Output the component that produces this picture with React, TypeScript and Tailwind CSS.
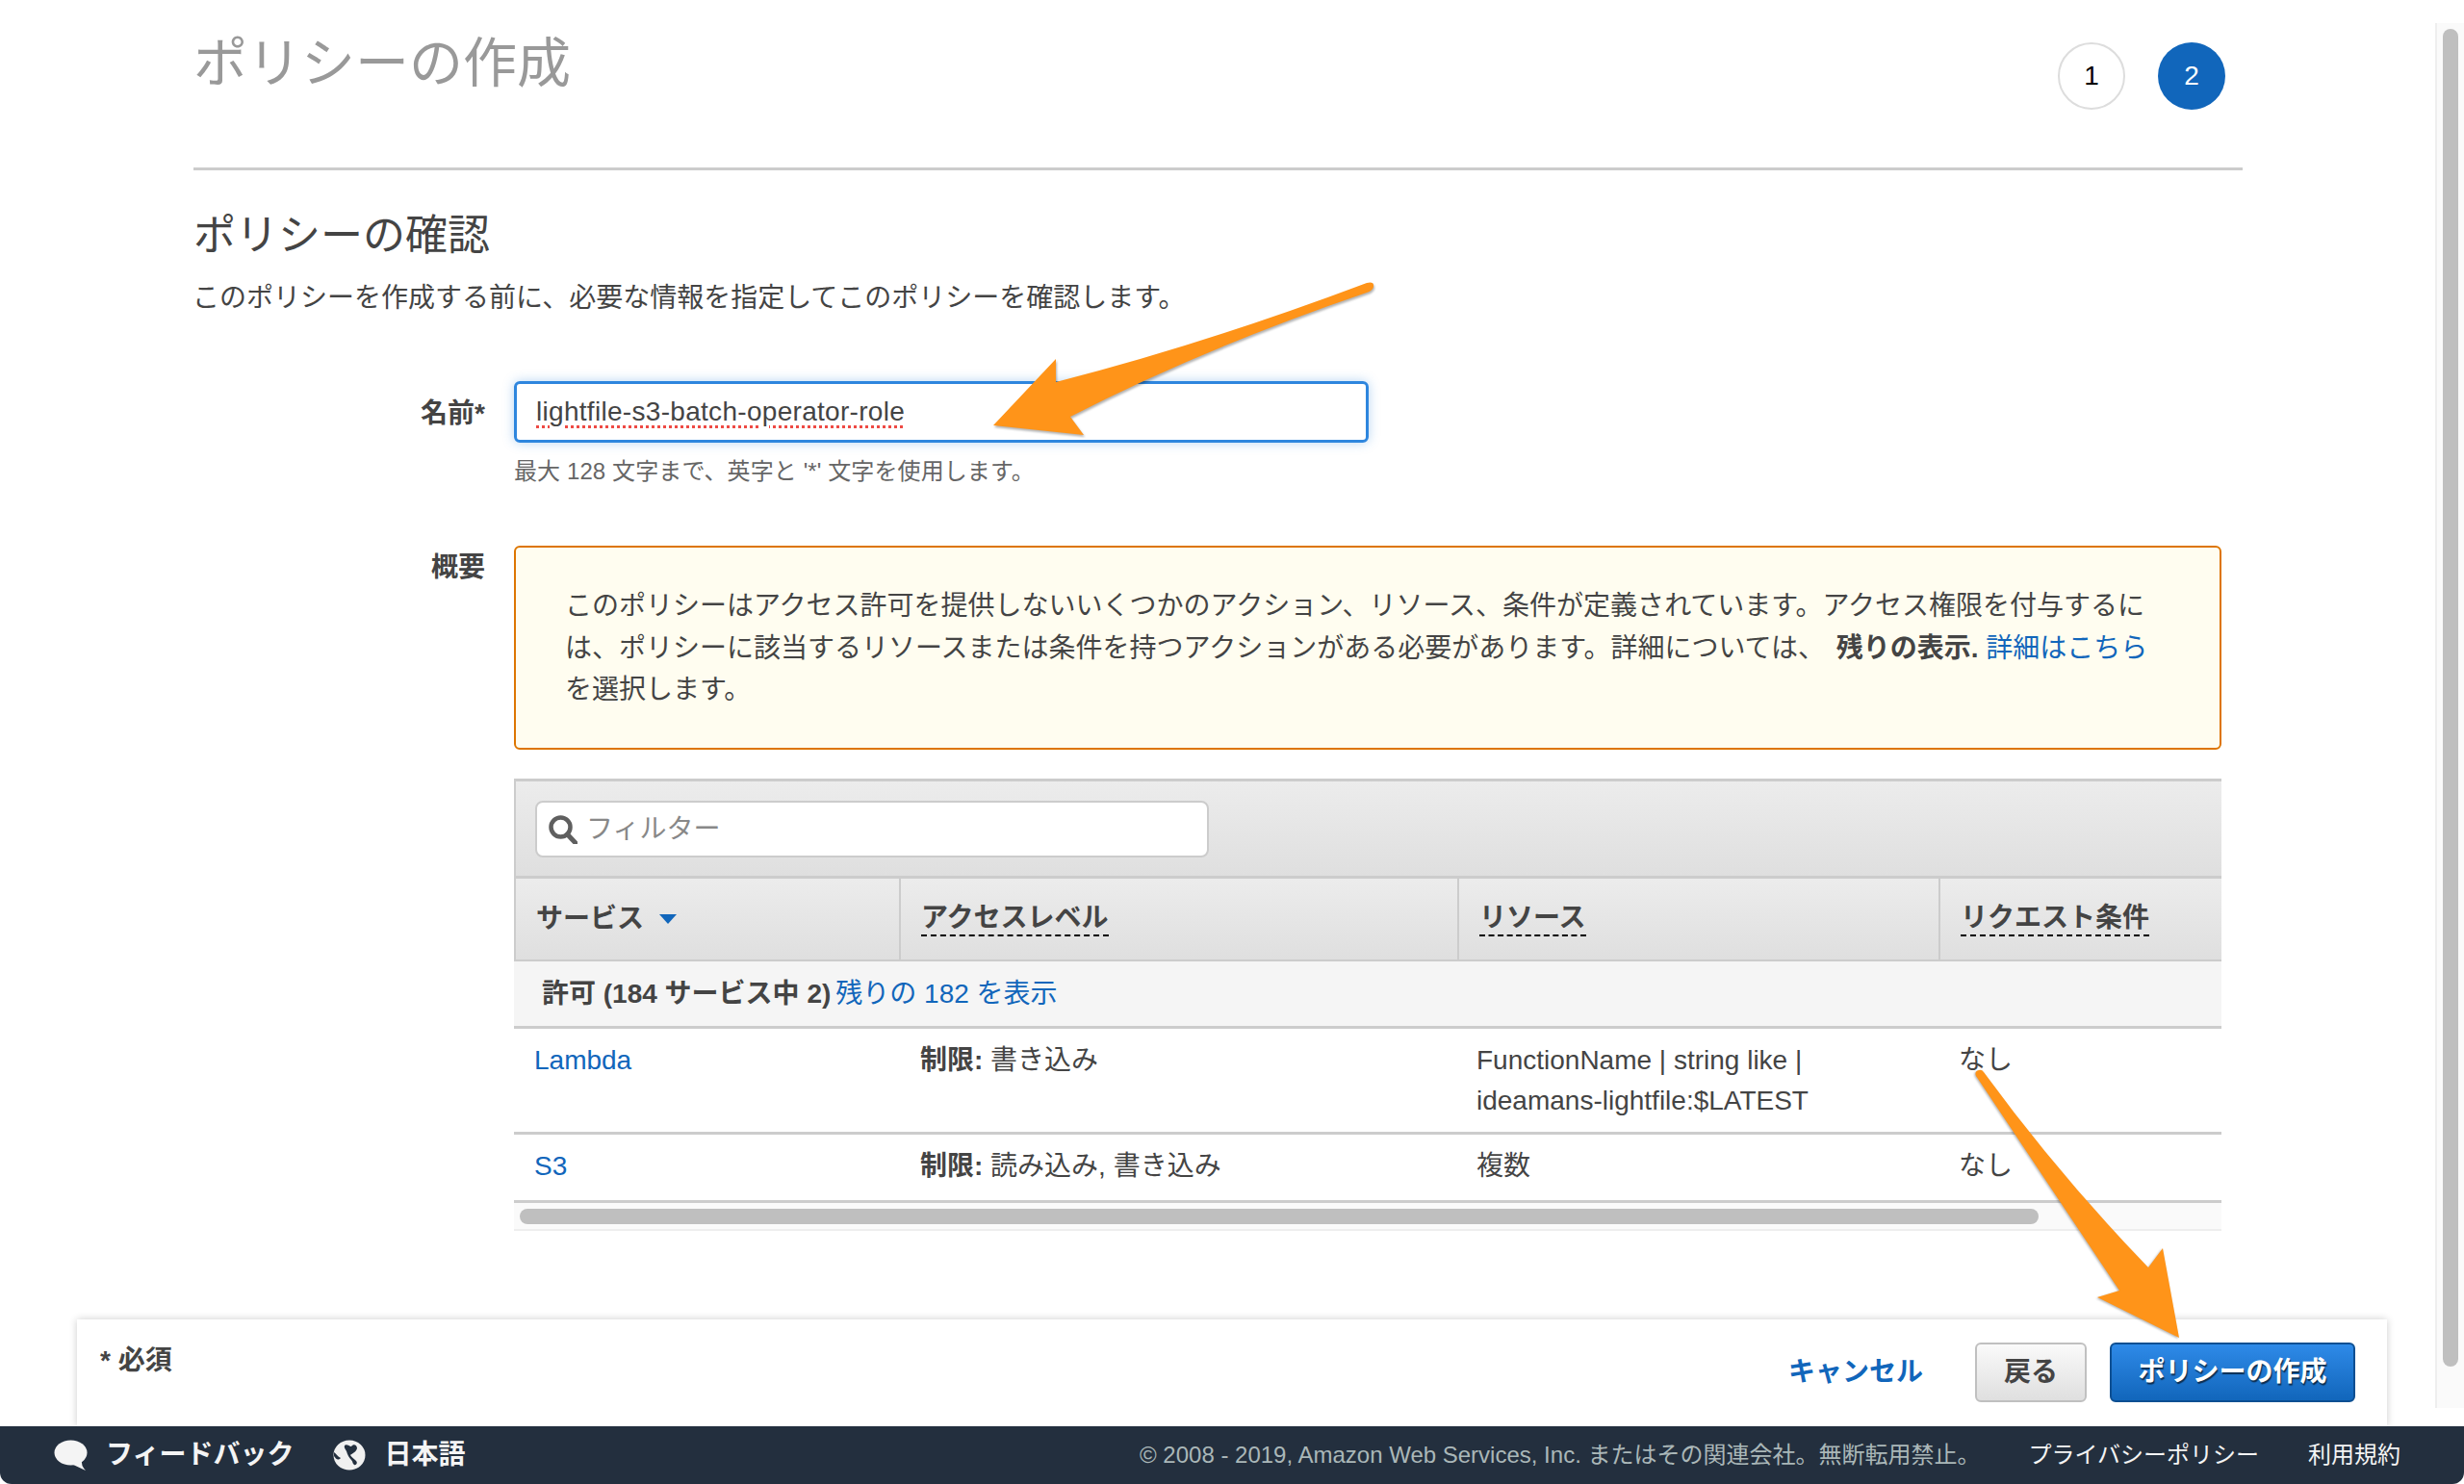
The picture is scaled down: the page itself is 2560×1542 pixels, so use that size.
const FONT = "font-['Liberation_Sans','Noto_Sans_CJK_JP',sans-serif]";

function Arrow1() {
  return (
    <svg className="absolute left-[1020px] top-[285px] drop-shadow-[1px_2px_1px_rgba(0,0,0,0.3)]" width="420" height="175" viewBox="1020 285 420 175">
      <path fill="#ff9419" d="M1032 442 L1097 373 L1097 397 Q1250 358 1420 294 Q1428 292 1427 298 Q1426 302 1420 304 Q1250 362 1112 433 L1126 452 Z" />
    </svg>
  );
}

function Arrow2() {
  return (
    <svg className="absolute left-[2040px] top-[1100px] drop-shadow-[-1px_1px_1px_rgba(0,0,0,0.3)]" width="240" height="300" viewBox="2040 1100 240 300">
      <path fill="#ff9419" d="M2264 1390 L2179 1348 L2202 1341 L2053 1118 Q2051 1113 2056 1112 Q2059 1111 2061 1114 Q2140 1222 2232 1317 L2247 1297 Z" />
    </svg>
  );
}

function Caret() {
  return <span className="inline-block w-0 h-0 border-x-[9px] border-x-transparent border-t-[10px] border-t-[#1166bb] ml-[16px] align-[1px]" />;
}

function SearchIcon() {
  return (
    <svg width="30" height="30" viewBox="0 0 30 30" className="shrink-0">
      <circle cx="12.5" cy="12.5" r="10" fill="none" stroke="#5f5f5f" strokeWidth="4.5" />
      <path d="M19.5 20 L28 29" stroke="#5f5f5f" strokeWidth="5" strokeLinecap="round" />
    </svg>
  );
}

function ChatIcon() {
  return (
    <svg width="35" height="33" viewBox="0 0 35 33" className="shrink-0">
      <ellipse cx="17.5" cy="13.5" rx="17" ry="13" fill="#f4f4f4" />
      <path d="M18 25 L33 32 Q28 27 29 21 Z" fill="#f4f4f4" />
    </svg>
  );
}

function GlobeIcon() {
  return (
    <svg width="34" height="32" viewBox="0 0 34 32" className="shrink-0 block">
      <ellipse cx="17" cy="16" rx="16.5" ry="15.5" fill="#f0f0f0" />
      <path d="M12 6 C14 4 17 7 19 7 C21 4 25 5 25 9 C24 13 20 14 18 16 C19 18 22 20 24 22 C26 24 24 27 22 26 C20 25 21 23 19 21 C17 19 15 16 14 12 C13 10 11 8 12 6 Z" fill="#232f3e" />
      <path d="M1 13 C3 14 5 18 8 19 C5 22 3 20 1 17 Z" fill="#232f3e" />
    </svg>
  );
}

function ColHead({ width, last, children }: { width: string; last?: boolean; children: React.ReactNode }) {
  return (
    <div className={`${width} ${last ? "" : "border-r-2 border-r-[#cccccc]"} h-full flex items-center pl-[21px] shrink-0`}>
      <span className="font-bold border-b-2 border-dashed border-black leading-[34px] pb-0">{children}</span>
    </div>
  );
}

export default function App() {
  return (
    <div className={`${FONT} relative w-[2560px] h-[1542px] overflow-hidden bg-white text-[28px] text-[#444444] flex flex-col`}>
      <main className="flex-1 min-h-0 relative pl-[201px]">
        <div className="w-[2129px]">
          <div className="h-[177px] border-b-[3px] border-[#cccccc] flex justify-between pr-[18px]">
            <h1 className="text-[56px] leading-[64px] mt-[34px] text-[#999999] font-normal">ポリシーの作成</h1>
            <div className="flex gap-[34px] mt-[44px]">
              <div className="w-[70px] h-[70px] rounded-full border-2 border-[#dddddd] flex items-center justify-center text-black">1</div>
              <div className="w-[70px] h-[70px] rounded-full bg-[#1166bb] flex items-center justify-center text-white">2</div>
            </div>
          </div>

          <h2 className="text-[44px] leading-[50px] mt-[43px] text-[#444444] font-normal">ポリシーの確認</h2>
          <p className="leading-[36px] mt-[22px] -ml-px">このポリシーを作成する前に、必要な情報を指定してこのポリシーを確認します。</p>
        </div>

        <div className="flex mt-[68px]">
          <div className="w-[303px] text-right font-bold leading-[36px] pt-[16px]">名前*</div>
          <div className="ml-[30px]">
            <div className="w-[888px] h-[64px] rounded-[6px] border-[3px] border-[#2e86de] shadow-[0_0_12px_rgba(46,134,222,0.35)] flex items-center pl-[20px]">
              <span className="underline decoration-dotted decoration-[#ee4a44] decoration-[3px] underline-offset-[5px] tracking-[0.3px]">lightfile-s3-batch-operator-role</span>
            </div>
            <div className="text-[24px] leading-[30px] mt-[15px] text-[#666666] tracking-[0.1px]">最大 128 文字まで、英字と '*' 文字を使用します。</div>
          </div>
        </div>

        <div className="flex mt-[62px]">
          <div className="w-[303px] text-right font-bold leading-[36px] pt-[5px]">概要</div>
          <div className="ml-[30px] w-[1774px]">
            <div className="h-[212px] rounded-[6px] border-2 border-[#dd7500] bg-[#fffdf0] pl-[51px] pr-[70px] pt-[39px] leading-[43.5px]">
              このポリシーはアクセス許可を提供しないいくつかのアクション、リソース、条件が定義されています。アクセス権限を付与するに<br />
              は、ポリシーに該当するリソースまたは条件を持つアクションがある必要があります。詳細については、 <b className="ml-[4px]">残りの表示.</b> <span className="text-[#1166bb]">詳細はこちら</span><br />
              を選択します。
            </div>

            <div className="mt-[30px]">
              <div className="h-[104px] border-l-2 border-t-[3px] border-b-[3px] border-[#cccccc] bg-gradient-to-b from-[#ececec] to-[#dfdfdf] pt-[20px] pl-[20px]">
                <div className="w-[700px] h-[59px] rounded-[8px] border-2 border-[#cccccc] bg-white flex items-center pl-[12px] gap-[9px] text-[#888888]">
                  <SearchIcon />
                  <span>フィルター</span>
                </div>
              </div>
              <div className="h-[87px] border-l-2 border-b-[3px] border-[#cccccc] bg-gradient-to-b from-[#ececec] to-[#dfdfdf] flex">
                <div className="w-[400px] border-r-2 border-r-[#cccccc] h-full flex items-center pl-[21px] font-bold shrink-0">
                  サービス<Caret />
                </div>
                <ColHead width="w-[580px]">アクセスレベル</ColHead>
                <ColHead width="w-[500px]">リソース</ColHead>
                <ColHead width="w-[292px]" last>リクエスト条件</ColHead>
              </div>
              <div className="h-[70px] bg-[#f5f5f5] border-b-[3px] border-[#cccccc] flex items-center pl-[29px] -mt-[1px]">
                <b>許可 (184 サービス中 2)</b><span className="text-[#1166bb] ml-[5px]">残りの 182 を表示</span>
              </div>
              <div className="h-[110px] border-b-[3px] border-[#cccccc] flex pt-[12px] leading-[42px]">
                <div className="w-[422px] pl-[21px] text-[#1166bb]">Lambda</div>
                <div className="w-[578px]"><b>制限:</b> 書き込み</div>
                <div className="w-[501px]">FunctionName | string like |<br />ideamans-lightfile:$LATEST</div>
                <div>なし</div>
              </div>
              <div className="h-[71px] border-b-[3px] border-[#cccccc] flex pt-[12px] leading-[42px]">
                <div className="w-[422px] pl-[21px] text-[#1166bb]">S3</div>
                <div className="w-[578px]"><b>制限:</b> 読み込み, 書き込み</div>
                <div className="w-[501px]">複数</div>
                <div>なし</div>
              </div>
              <div className="h-[29px] bg-[#fafafa] border-b-2 border-[#eeeeee] pl-[6px] pt-[6px]">
                <div className="w-[1578px] h-[16px] rounded-full bg-[#bfbfbf]" />
              </div>
            </div>
          </div>
        </div>

        <div className="absolute right-0 top-[24px] h-[1439px] w-[30px] bg-[#fafafa] border-l-2 border-[#eeeeee] pl-[6px] pt-[6px]">
          <div className="w-[16px] h-[1390px] rounded-full bg-[#bfbfbf]" />
        </div>

        <div className="absolute left-[80px] w-[2400px] bottom-0 h-[111px] bg-white shadow-[0_0_8px_rgba(0,0,0,0.2)] flex justify-between pl-[24px] pr-[33px]">
          <div className="font-bold leading-[36px] pt-[25px]">* 必須</div>
          <div className="flex items-start pt-[24px]">
            <span className="font-bold text-[#1166bb] leading-[62px] mr-[54px]">キャンセル</span>
            <button className="w-[116px] h-[62px] rounded-[6px] border-2 border-[#c0c0c0] bg-gradient-to-b from-[#fafafa] to-[#dfdfdf] font-bold text-[#444444] mr-[24px]">戻る</button>
            <button className="w-[255px] h-[62px] rounded-[6px] border-2 border-[#0d4f92] bg-gradient-to-b from-[#2e8ae8] to-[#1166bb] font-bold text-white [text-shadow:1px_2px_1px_rgba(0,0,0,0.6)]">ポリシーの作成</button>
          </div>
        </div>
      </main>

      <footer className="h-[60px] bg-[#232f3e] rounded-b-[12px] flex items-center pl-[56px] pr-[66px] text-[#f4f4f4] shrink-0 relative">
        <ChatIcon />
        <span className="font-bold ml-[19px] -mt-px">フィードバック</span>
        <span className="ml-[41px]"><GlobeIcon /></span>
        <span className="font-bold ml-[19px] -mt-px">日本語</span>
        <span className="ml-auto text-[24px] text-[#aab7b8] -mt-px">© 2008 - 2019, Amazon Web Services, Inc. またはその関連会社。無断転用禁止。</span>
        <span className="ml-[50px] text-[24px] -mt-px">プライバシーポリシー</span>
        <span className="ml-[51px] text-[24px] -mt-px">利用規約</span>
      </footer>

      <Arrow1 />
      <Arrow2 />
    </div>
  );
}
